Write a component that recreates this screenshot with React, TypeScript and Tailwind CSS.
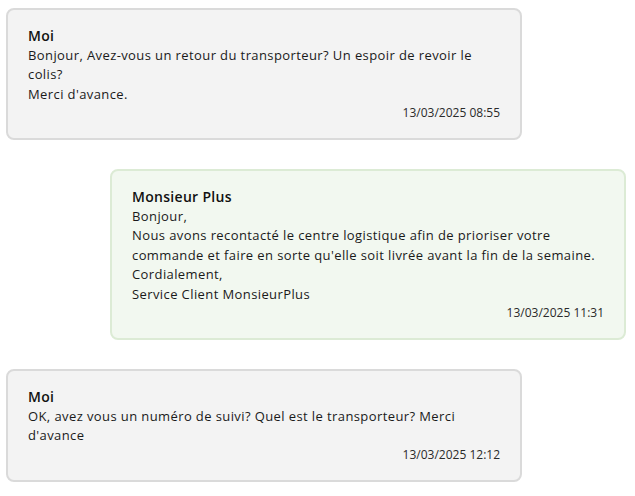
import React from 'react'

type Msg = {
  author: string
  lines: string[]
  date: string
  mine: boolean
}

const messages: Msg[] = [
  {
    author: 'Moi',
    lines: ["Bonjour, Avez-vous un retour du transporteur? Un espoir de revoir le colis?", "Merci d'avance."],
    date: '13/03/2025 08:55',
    mine: true,
  },
  {
    author: 'Monsieur Plus',
    lines: [
      'Bonjour,',
      "Nous avons recontacté le centre logistique afin de prioriser votre commande et faire en sorte qu'elle soit livrée avant la fin de la semaine.",
      'Cordialement,',
      'Service Client MonsieurPlus',
    ],
    date: '13/03/2025 11:31',
    mine: false,
  },
  {
    author: 'Moi',
    lines: ["OK, avez vous un numéro de suivi? Quel est le transporteur? Merci d'avance"],
    date: '13/03/2025 12:12',
    mine: true,
  },
]

function Bubble({ msg }: { msg: Msg }) {
  const tone = msg.mine
    ? 'self-start bg-[#f3f3f3] border-[#dadada]'
    : 'self-end bg-[#f2f8f0] border-[#dcebd5]'
  return (
    <div className={`w-[516px] rounded-lg border-2 px-5 py-4 ${tone}`}>
      <div className="text-[14px] leading-[19.5px] font-semibold text-[#111] tracking-[0.3px]">{msg.author}</div>
      <div className="text-[13px] leading-[19.5px] text-[#1a1a1a] tracking-[0.4px]">
        {msg.lines.map((l, i) => (
          <p key={i}>{l}</p>
        ))}
      </div>
      <div className="text-right text-[12px] leading-[18px] text-[#2a2a2a]">{msg.date}</div>
    </div>
  )
}

export default function App() {
  return (
    <div
      className="min-h-screen bg-white pl-[6px] pr-[9px] pt-2 flex flex-col gap-[29px]"
      style={{ fontFamily: '"Open Sans", "Liberation Sans", sans-serif' }}
    >
      {messages.map((m, i) => (
        <Bubble key={i} msg={m} />
      ))}
    </div>
  )
}
